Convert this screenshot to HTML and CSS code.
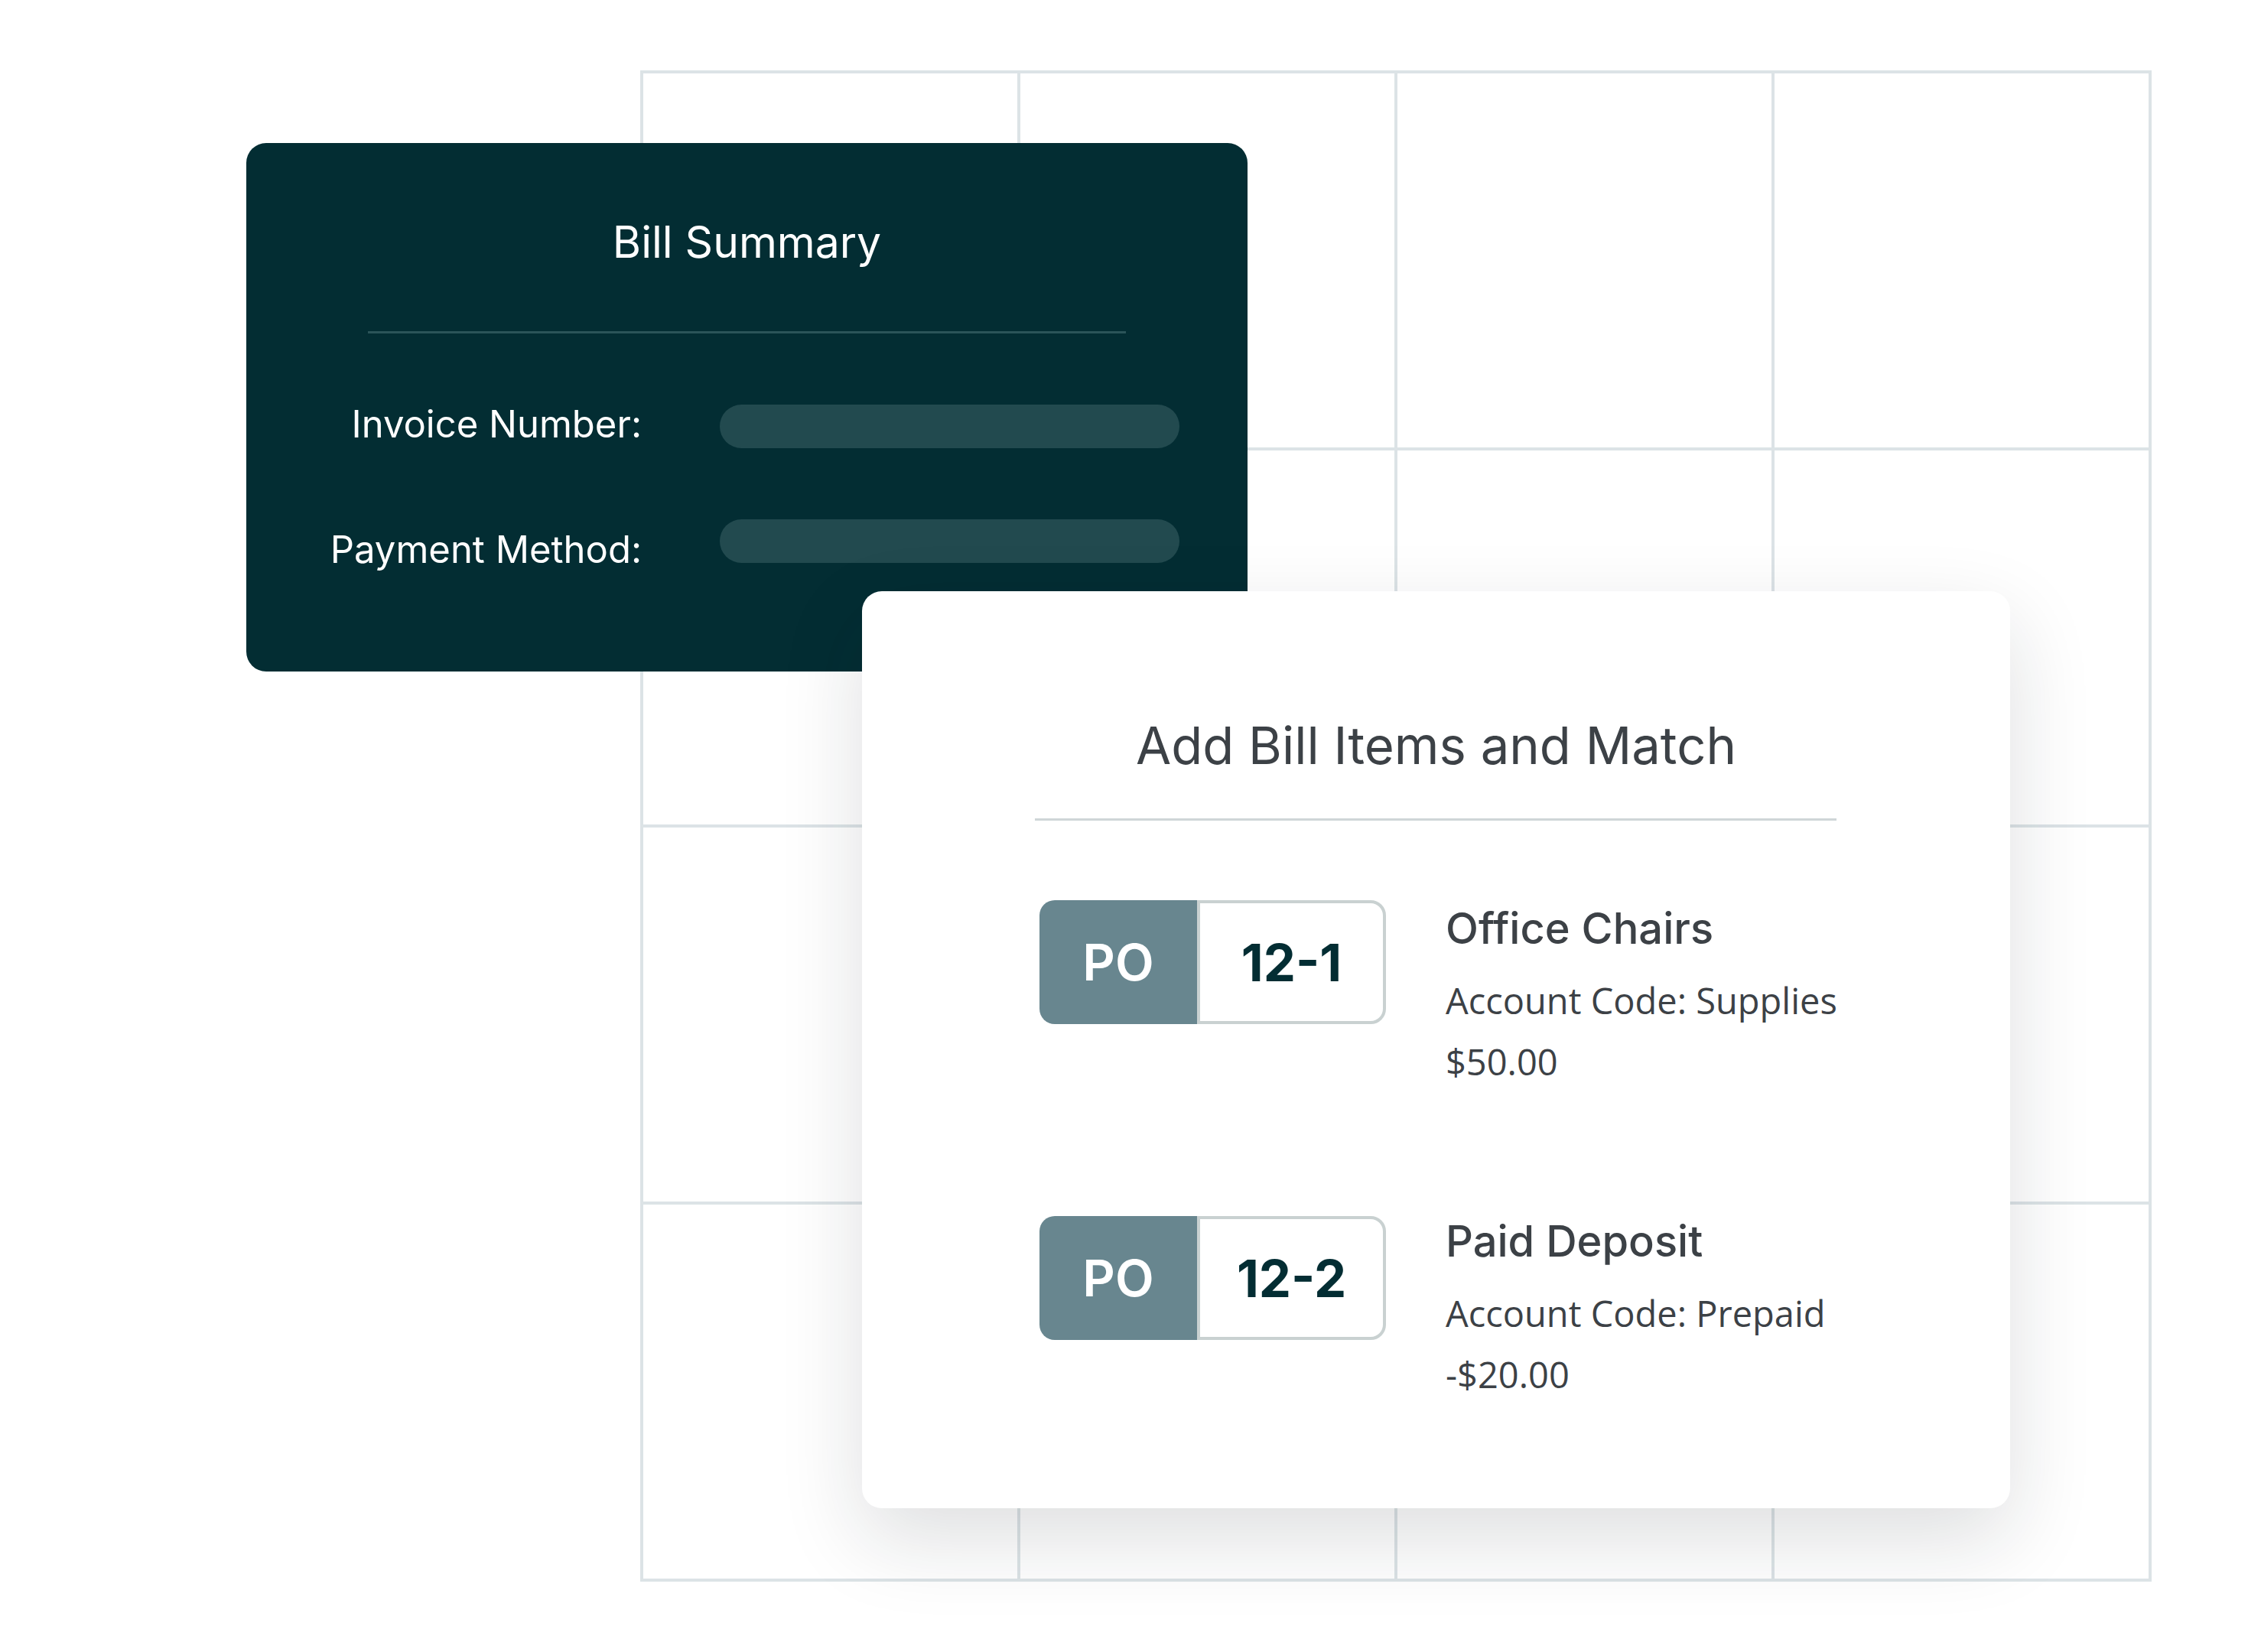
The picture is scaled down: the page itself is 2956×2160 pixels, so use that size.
FILE: index.html
```html
<!DOCTYPE html>
<html lang="en">
<head>
  <meta charset="UTF-8">
  <title>Bill Matching</title>
  <link rel="stylesheet" href="styles.css">
</head>
<body>

<div class="stage">

  <!-- backdrop grid, 4 x 4 -->
  <div class="grid">
    <div></div><div></div><div></div><div></div>
    <div></div><div></div><div></div><div></div>
    <div></div><div></div><div></div><div></div>
    <div></div><div></div><div></div><div></div>
  </div>

  <section class="summary">
    <h2 class="summary-title">Bill Summary</h2>
    <div class="summary-rule"></div>
    <div class="fields">
      <span class="field-label">Invoice Number:</span>
      <span class="field-bar"></span>
      <span class="field-label">Payment Method:</span>
      <span class="field-bar"></span>
    </div>
  </section>

  <section class="match">
    <h2 class="match-title">Add Bill Items and Match</h2>
    <div class="match-rule"></div>

    <div class="item">
      <div class="po">
        <span class="po-tag">PO</span>
        <span class="po-num">12-1</span>
      </div>
      <div class="item-info">
        <h3>Office Chairs</h3>
        <p class="code">Account Code: Supplies</p>
        <p class="amount">$50.00</p>
      </div>
    </div>

    <div class="item">
      <div class="po">
        <span class="po-tag">PO</span>
        <span class="po-num">12-2</span>
      </div>
      <div class="item-info">
        <h3>Paid Deposit</h3>
        <p class="code">Account Code: Prepaid</p>
        <p class="amount">-$20.00</p>
      </div>
    </div>
  </section>

</div>

</body>
</html>
```

FILE: styles.css
```css
body { margin: 0; background: #fff; font-family: Inter, "Noto Sans", sans-serif; }

.stage {
  position: relative;
  width: 2956px;
  height: 2160px;
  overflow: hidden;
}

/* grid lines come from the gap showing the container colour */
.grid {
  display: grid;
  grid-template-columns: repeat(4, 489px);
  grid-template-rows: repeat(4, 489px);
  gap: 4px;
  padding: 4px;
  width: max-content;
  margin: 92px 0 0 837px;
  background: #dce3e6;
}
.grid div { background: #fff; }

/* dark card */
.summary {
  position: absolute;
  left: 322px;
  top: 187px;
  width: 1309px;
  height: 691px;
  box-sizing: border-box;
  padding-top: 96px;
  background: #032d33;
  border-radius: 26px;
  color: #fff;
}
.summary-title {
  margin: 0;
  text-align: center;
  font-size: 57px;
  font-weight: 400;
  line-height: 68px;
}
.summary-rule {
  height: 3px;
  margin: 82px 159px 0;
  background: #2b5459;
}
.fields {
  display: grid;
  grid-template-columns: 517px 601px;
  column-gap: 102px;
  row-gap: 93px;
  align-items: center;
  margin-top: 93px;
}
.field-label {
  text-align: right;
  font-size: 49px;
  line-height: 45px;
}
/* labels sit a touch off the bar centre */
.field-label:first-child { margin-bottom: 7px; }
.field-label:nth-child(3) { margin-top: 12px; padding-top: 10px; line-height: 35px; }
.field-bar {
  height: 57px;
  border-radius: 29px;
  background: #224a4f;
}

/* white card on top */
.match {
  position: absolute;
  left: 1127px;
  top: 773px;
  width: 1501px;
  height: 1199px;
  box-sizing: border-box;
  padding-top: 162px;
  background: #fff;
  border-radius: 26px;
  box-shadow: 0 40px 110px rgba(20, 30, 35, 0.14);
  color: #3c4146;
}
.match-title {
  margin: 0;
  text-align: center;
  font-size: 67px;
  font-weight: 400;
  line-height: 80px;
}
.match-rule {
  height: 3px;
  margin: 55px 227px 0 226px;
  background: #cfd6d8;
}

.item {
  display: flex;
  align-items: flex-start;
  gap: 78px;
  margin: 104px 0 0 232px;
}
.item + .item { margin-top: 169px; }

.po {
  display: flex;
  height: 162px;
}
.po-tag {
  width: 206px;
  display: flex;
  align-items: center;
  justify-content: center;
  background: #68868f;
  border-radius: 20px 0 0 20px;
  color: #fff;
  font-size: 66px;
  font-weight: 600;
}
.po-num {
  width: 247px;
  box-sizing: border-box;
  display: flex;
  align-items: center;
  justify-content: center;
  border: 4px solid #c9d1d1;
  border-radius: 0 20px 20px 0;
  color: #032d33;
  font-size: 67px;
  font-weight: 650;
}

.item-info h3 {
  margin: 0;
  font-size: 56px;
  font-weight: 500;
  line-height: 74px;
}
.item + .item h3 { margin-top: -4px; }
.item-info p {
  margin: 0;
  font-family: "Open Sans", "Noto Sans", sans-serif;
  font-size: 47px;
}
.item-info .code { margin-top: 24px; line-height: 66px; }
.item-info .amount { margin-top: 14px; line-height: 66px; }
```
